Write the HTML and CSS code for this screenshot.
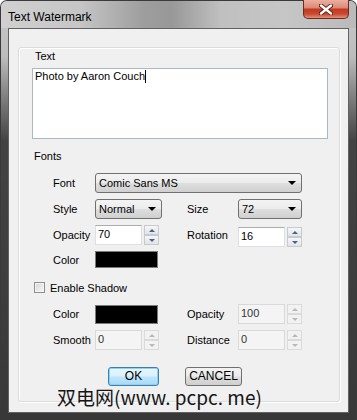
FILE: index.html
```html
<!DOCTYPE html>
<html lang="en">

<head>
    <meta charset="UTF-8">
    <title>Text Watermark</title>
    <link rel="stylesheet" href="styles.css">
</head>

<body>
    <div class="window">
        <div class="titlebar">
            <span class="title">Text Watermark</span>
            <div class="close">
                <svg width="14" height="11" viewBox="0 0 14 11">
                    <path d="M2 1.5 L12 9.5 M12 1.5 L2 9.5" stroke="#5a1d14" stroke-width="4.2" stroke-linecap="round" />
                    <path d="M2 1.5 L12 9.5 M12 1.5 L2 9.5" stroke="#fff" stroke-width="2.4" stroke-linecap="round" />
                </svg>
            </div>
        </div>

        <div class="client">
            <div class="group">
                <div class="caption">Text</div>
                <div class="textarea">Photo by Aaron Couch<span class="caret"></span></div>

                <div class="caption fonts">Fonts</div>

                <div class="row row-font">
                    <span class="label">Font</span>
                    <div class="select wide">Comic Sans MS<span class="arrow"></span></div>
                </div>
                <div class="row row-style">
                    <span class="label">Style</span>
                    <div class="select">Normal<span class="arrow"></span></div>
                    <span class="label">Size</span>
                    <div class="select">72<span class="arrow"></span></div>
                </div>
                <div class="row row-opacity">
                    <span class="label">Opacity</span>
                    <div class="spin">
                        <div class="field">70</div>
                        <div class="spin-btns"><span class="up"></span><span class="down"></span></div>
                    </div>
                    <span class="label">Rotation</span>
                    <div class="spin low">
                        <div class="field">16</div>
                        <div class="spin-btns"><span class="up"></span><span class="down"></span></div>
                    </div>
                </div>
                <div class="row row-color">
                    <span class="label">Color</span>
                    <div class="swatch"></div>
                </div>

                <div class="check"><span class="box"></span>Enable Shadow</div>

                <div class="row row-shadow">
                    <span class="label">Color</span>
                    <div class="swatch tall"></div>
                    <span class="label">Opacity</span>
                    <div class="spin off">
                        <div class="field">100</div>
                        <div class="spin-btns"><span class="up"></span><span class="down"></span></div>
                    </div>
                </div>
                <div class="row row-smooth">
                    <span class="label">Smooth</span>
                    <div class="spin off">
                        <div class="field">0</div>
                        <div class="spin-btns"><span class="up"></span><span class="down"></span></div>
                    </div>
                    <span class="label">Distance</span>
                    <div class="spin off">
                        <div class="field">0</div>
                        <div class="spin-btns"><span class="up"></span><span class="down"></span></div>
                    </div>
                </div>

                <div class="buttons">
                    <div class="btn ok">OK</div>
                    <div class="btn cancel">CANCEL</div>
                </div>
            </div>

            <div class="watermark">双电网(www. pcpc. me)</div>
        </div>
    </div>
</body>

</html>
```

FILE: styles.css
```css
body {
    margin: 0;
    font-family: "Liberation Sans", Arial, sans-serif;
    font-size: 11px;
    color: #000;
}

.window {
    height: 420px;
    box-sizing: border-box;
    border: 1px solid #3a3a3a;
    border-bottom: none;
    border-radius: 7px 7px 0 0;
    background: linear-gradient(to bottom, #c9c9c9 0, #bdbdbd 55px, #7a7a7a 100px, #434343 140px, #383838 100%);
    display: flex;
    flex-direction: column;
}

.titlebar {
    height: 27px;
    display: flex;
    justify-content: space-between;
    align-items: flex-start;
    padding: 0 7px 0 7px;
    border-radius: 6px 6px 0 0;
    background: linear-gradient(to right, #d0d0d0 0, #c6c6c6 22%, #9e9e9e 40%, #989898 48%, #c0c0c0 62%, #c6c6c6 80%, #bababa 100%);
}

.title {
    font-size: 12px;
    margin-top: 9px;
    color: #000;
}

.close {
    width: 44px;
    height: 18px;
    margin-top: -1px;
    border: 1px solid #6b2b22;
    border-top: none;
    border-radius: 0 0 5px 5px;
    background: linear-gradient(to bottom, #eab0a2 0, #dc8a77 42%, #c23a20 52%, #c94a32 78%, #e4927a 100%);
    display: flex;
    justify-content: center;
    align-items: center;
}

.client {
    position: relative;
    height: 385px;
    margin: 0 7px;
    box-sizing: border-box;
    border: 1px solid #626262;
    background: #f0f0f0;
    padding: 18px 8px 0 9px;
}

.group {
    height: 355px;
    box-sizing: border-box;
    border: 1px solid #d8dcdf;
    border-radius: 3px;
    box-shadow: inset 1px 1px 0 #fff, 1px 1px 0 #fff;
    padding: 2px 11px 0 13px;
}

.caption {
    line-height: 13px;
    margin-left: 3px;
}

.textarea {
    margin-top: 5px;
    height: 71px;
    width: 296px;
    box-sizing: border-box;
    border: 1px solid #abb9c4;
    background: #fff;
    padding: 1px 2px;
    line-height: 13px;
}

.caret {
    display: inline-block;
    width: 1px;
    height: 13px;
    background: #000;
    vertical-align: top;
}

.fonts {
    margin-top: 11px;
    margin-left: 2px;
}

.row {
    display: grid;
    grid-template-columns: 42px 92px 51px 64px;
    align-items: center;
    margin-left: 21px;
}

.row-font {
    margin-top: 10px;
    height: 20px;
}

.row-style {
    margin-top: 6px;
    height: 20px;
}

.row-opacity {
    margin-top: 4px;
    height: 20px;
}

.row-color {
    margin-top: 8px;
    height: 17px;
}

.row-shadow {
    margin-top: 11px;
    height: 19px;
}

.row-smooth {
    margin-top: 7px;
    height: 19px;
}

.select {
    position: relative;
    height: 20px;
    width: 64px;
    box-sizing: border-box;
    border: 1px solid #707070;
    border-radius: 3px;
    background: linear-gradient(to bottom, #f4f4f4 0, #ececec 48%, #dedede 52%, #d0d0d0 100%);
    padding-left: 3px;
    line-height: 18px;
}

.row-style .select:first-of-type {
    width: 67px;
}

.select.wide {
    grid-column: 2 / 5;
    width: 207px;
}

.arrow {
    position: absolute;
    right: 5px;
    top: 7px;
    border-left: 4px solid transparent;
    border-right: 4px solid transparent;
    border-top: 4px solid #000;
}

.spin {
    display: flex;
    gap: 2px;
    height: 20px;
}

.spin.low {
    margin-top: 4px;
}

.field {
    width: 47px;
    box-sizing: border-box;
    border: 1px solid #dbdfe6;
    border-top-color: #abadb3;
    background: #fff;
    padding-left: 2px;
    line-height: 17px;
}

.spin-btns {
    width: 15px;
    display: flex;
    flex-direction: column;
}

.spin-btns span {
    flex: 1;
    position: relative;
    box-sizing: border-box;
    border: 1px solid #c6cbd1;
    background: linear-gradient(to bottom, #f6f6f6, #e2e4e7);
}

.spin-btns span::after {
    content: "";
    position: absolute;
    left: 4px;
    top: 3px;
    border-left: 3px solid transparent;
    border-right: 3px solid transparent;
}

.spin-btns .up::after {
    border-bottom: 3px solid #4d6185;
}

.spin-btns .down::after {
    border-top: 3px solid #4d6185;
}

.spin.off .field {
    background: #f4f4f4;
    border-color: #d9d9d9;
    color: #333;
}

.spin.off .spin-btns span {
    border-color: #dadada;
    background: #f2f2f2;
}

.spin.off .spin-btns .up::after {
    border-bottom-color: #b8b8b8;
}

.spin.off .spin-btns .down::after {
    border-top-color: #b8b8b8;
}

.swatch {
    width: 63px;
    height: 17px;
    box-sizing: border-box;
    border: 1px solid #7a7a7a;
    background: #000;
}

.swatch.tall {
    height: 19px;
}

.check {
    display: flex;
    align-items: center;
    gap: 5px;
    margin-top: 14px;
    margin-left: 2px;
    height: 11px;
}

.box {
    width: 11px;
    height: 11px;
    box-sizing: border-box;
    border: 1px solid #8e8f8f;
    background: linear-gradient(135deg, #d6d6d6, #f8f8f8);
    box-shadow: inset 0 0 0 1px #f4f4f4;
}

.buttons {
    display: flex;
    gap: 26px;
    margin-top: 18px;
    margin-left: 76px;
}

.btn {
    height: 19px;
    box-sizing: border-box;
    border-radius: 3px;
    text-align: center;
    line-height: 17px;
    font-size: 12px;
}

.ok {
    width: 51px;
    border: 1px solid #3c7fb1;
    background: linear-gradient(to bottom, #eaf6fd 0, #d9f0fc 48%, #bee6fd 52%, #a7d9f5 100%);
    box-shadow: inset 0 0 0 1px #8fd0f5;
}

.cancel {
    width: 57px;
    border: 1px solid #707070;
    background: linear-gradient(to bottom, #f2f2f2 0, #ebebeb 48%, #dddddd 52%, #cfcfcf 100%);
}

.watermark {
    position: absolute;
    left: 48px;
    top: 358px;
    font-family: "Noto Sans CJK SC", sans-serif;
    font-size: 19px;
    color: #151515;
    white-space: nowrap;
    line-height: 20px;
}
```
